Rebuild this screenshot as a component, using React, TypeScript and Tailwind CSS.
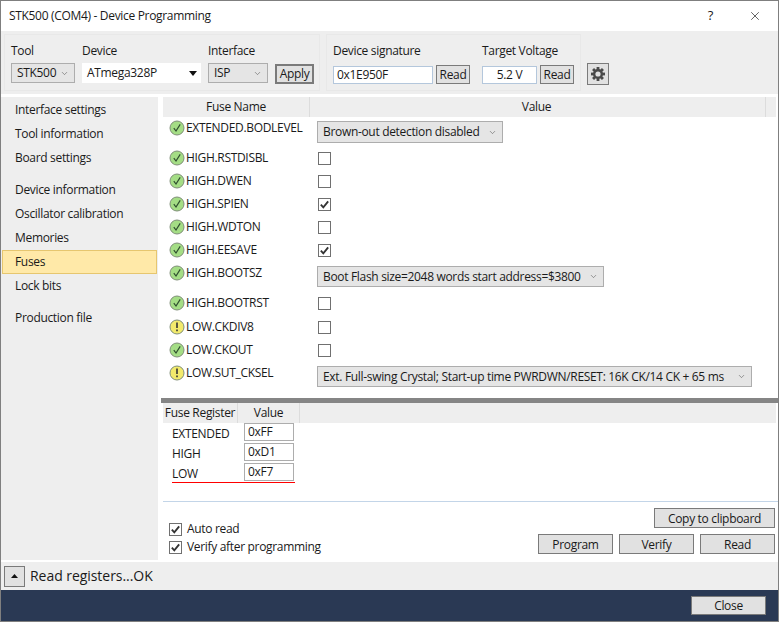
import { ChevronDown, X } from "lucide-react";

const Btn = ({ label, className }: { label: string; className: string }) => (
  <div className={`flex items-center justify-center border border-[#7a7a7a] bg-[#e1e1e1] text-[12px] text-[#1a1a1a] ${className}`}>{label}</div>
);

const Combo = ({ label, className }: { label: string; className: string }) => (
  <div className={`flex items-center justify-between border border-[#adadad] bg-[#e5e5e5] pl-[5px] pr-[5px] text-[12px] text-[#1a1a1a] ${className}`}>
    <span className="whitespace-nowrap">{label}</span>
    <ChevronDown size={9} strokeWidth={1.5} className="shrink-0 text-[#555]" />
  </div>
);

const Check = ({ checked }: { checked?: boolean }) => (
  <div className="flex h-[13px] w-[13px] shrink-0 items-center justify-center border border-[#707070] bg-white">
    {checked && (
      <svg width="11" height="11" viewBox="0 0 12 12">
        <path d="M2 6.2 L4.7 9.2 L10 2.6" fill="none" stroke="#333" strokeWidth="2" />
      </svg>
    )}
  </div>
);

const StatusIcon = ({ warn }: { warn?: boolean }) => (
  <svg width="16" height="16" viewBox="0 0 16 16" className="shrink-0">
    <circle cx="8" cy="8" r="7" fill={warn ? "#f2ea6c" : "#a4dd85"} stroke="#7f8f78" strokeWidth="1" />
    {warn ? (
      <path d="M8 3.6 V9 M8 10.6 V12.2" stroke="#333" strokeWidth="1.6" fill="none" />
    ) : (
      <path d="M4.8 8.2 L7 11 L11.2 4.4" stroke="#2f4f2f" strokeWidth="1.2" fill="none" />
    )}
  </svg>
);

type Fuse = { name: string; h: string; warn?: boolean; checked?: boolean; combo?: string; comboW?: string };

const fuses: Fuse[] = [
  { name: "EXTENDED.BODLEVEL", h: "h-[30px]", combo: "Brown-out detection disabled", comboW: "h-[22px] w-[186px]" },
  { name: "HIGH.RSTDISBL", h: "h-[23px]" },
  { name: "HIGH.DWEN", h: "h-[23px]" },
  { name: "HIGH.SPIEN", h: "h-[23px]", checked: true },
  { name: "HIGH.WDTON", h: "h-[23px]" },
  { name: "HIGH.EESAVE", h: "h-[23px]", checked: true },
  { name: "HIGH.BOOTSZ", h: "h-[30px]", combo: "Boot Flash size=2048 words start address=$3800", comboW: "h-[21px] w-[287px]" },
  { name: "HIGH.BOOTRST", h: "h-[24px]" },
  { name: "LOW.CKDIV8", h: "h-[23px]", warn: true },
  { name: "LOW.CKOUT", h: "h-[23px]" },
  { name: "LOW.SUT_CKSEL", h: "h-[30px]", warn: true, combo: "Ext. Full-swing Crystal; Start-up time PWRDWN/RESET: 16K CK/14 CK + 65 ms", comboW: "h-[21px] w-[435px]" },
];

const navGroups = [
  ["Interface settings", "Tool information", "Board settings"],
  ["Device information", "Oscillator calibration", "Memories", "Fuses", "Lock bits"],
  ["Production file"],
];

const registers = [
  { name: "EXTENDED", value: "0xFF" },
  { name: "HIGH", value: "0xD1" },
  { name: "LOW", value: "0xF7" },
];

export default function App() {
  return (
    <div className="flex h-[622px] w-[779px] flex-col overflow-hidden border border-[#7f7f7f] bg-white font-['Open_Sans','Noto_Sans',sans-serif] text-[12px] tracking-[-0.32px] text-[#1a1a1a]">
      {/* title bar */}
      <div className="flex h-[30px] shrink-0 items-center justify-between pl-[8px] pr-[16px]">
        <span className="text-[12px]">STK500 (COM4) - Device Programming</span>
        <div className="flex items-center gap-[35px]">
          <span className="text-[13px]">?</span>
          <X size={14} strokeWidth={1.2} className="text-[#222]" />
        </div>
      </div>

      {/* toolbar */}
      <div className="flex h-[63px] shrink-0 items-start gap-[6px] bg-[#eeeeee] pl-[3px] pt-[3px]">
        <div className="flex h-[57px] w-[316px] items-start gap-[7px] border border-[#e8e8e8] pl-[6px] pt-[7px]">
          <div className="flex w-[64px] flex-col gap-[3px]">
            <span className="h-[18px]">Tool</span>
            <Combo label="STK500" className="h-[20px] w-[64px]" />
          </div>
          <div className="flex w-[119px] flex-col gap-[3px]">
            <span className="h-[18px]">Device</span>
            <div className="flex h-[20px] items-center justify-between bg-white pl-[5px] pr-[4px]">
              <span>ATmega328P</span>
              <svg width="8" height="5" viewBox="0 0 8 5"><path d="M0 0H8L4 5Z" fill="#111" /></svg>
            </div>
          </div>
          <div className="flex w-[60px] flex-col gap-[3px]">
            <span className="h-[18px]">Interface</span>
            <Combo label="ISP" className="h-[20px] w-[60px]" />
          </div>
          <Btn label="Apply" className="mt-[22px] h-[20px] w-[39px] border-2 border-[#6f6f6f]" />
        </div>
        <div className="flex h-[57px] w-[255px] items-start gap-[12px] border border-[#e8e8e8] pl-[6px] pt-[7px]">
          <div className="flex flex-col gap-[5px]">
            <span className="h-[18px]">Device signature</span>
            <div className="flex items-center gap-[3px]">
              <div className="flex h-[18px] w-[100px] items-center border border-[#b4c7dc] bg-white pl-[3px]">0x1E950F</div>
              <Btn label="Read" className="h-[19px] w-[34px]" />
            </div>
          </div>
          <div className="flex flex-col gap-[5px]">
            <span className="h-[18px]">Target Voltage</span>
            <div className="flex items-center gap-[3px]">
              <div className="flex h-[18px] w-[55px] items-center justify-center border border-[#b4c7dc] bg-white">5.2 V</div>
              <Btn label="Read" className="h-[19px] w-[34px]" />
            </div>
          </div>
        </div>
        <div className="mt-[29px] flex h-[22px] w-[22px] items-center justify-center border border-[#7a7a7a] bg-[#e1e1e1]">
          <svg width="16" height="16" viewBox="0 0 16 16">
            <g fill="#4a4a4a">
              <circle cx="8" cy="8" r="5" />
              <rect x="6.6" y="1" width="2.8" height="14" />
              <rect x="6.6" y="1" width="2.8" height="14" transform="rotate(45 8 8)" />
              <rect x="6.6" y="1" width="2.8" height="14" transform="rotate(90 8 8)" />
              <rect x="6.6" y="1" width="2.8" height="14" transform="rotate(135 8 8)" />
            </g>
            <circle cx="8" cy="8" r="2.6" fill="#e1e1e1" />
          </svg>
        </div>
      </div>

      {/* body */}
      <div className="mt-[3px] flex min-h-0 flex-1">
        <div className="mb-[2px] flex w-[157px] shrink-0 flex-col bg-[#eeeeee] pl-px pt-px">
          {navGroups.map((group, i) => (
            <div key={i} className="mb-[8px] flex flex-col">
              {group.map((item) => (
                <div
                  key={item}
                  className={`flex h-[24px] w-[155px] items-center ${item === "Fuses" ? "border border-[#e6c66f] bg-[#ffe9a8] pl-[12px]" : "pl-[13px]"}`}
                >
                  {item}
                </div>
              ))}
            </div>
          ))}
        </div>

        <div className="flex min-w-0 flex-1 flex-col pl-[3px]">
          {/* fuse table */}
          <div className="ml-[2px] mr-[2px] flex h-[20px] shrink-0 items-center bg-[#eeeeee]">
            <div className="flex h-full w-[147px] items-center justify-center border-r border-[#dcdcdc]">Fuse Name</div>
            <div className="flex h-full w-[456px] items-center justify-center border-r border-[#dcdcdc] pr-[2px]">Value</div>
          </div>
          <div className="ml-[2px] h-[281px] shrink-0">
            {fuses.map((f) => (
              <div key={f.name} className={`flex items-start ${f.h}`}>
                <div className="flex w-[154px] shrink-0 items-center gap-[1px] pl-[6px] pt-[2px]">
                  <StatusIcon warn={f.warn} />
                  <span className="whitespace-nowrap">{f.name}</span>
                </div>
                {f.combo ? (
                  <Combo label={f.combo} className={`mt-[4px] ${f.comboW}`} />
                ) : (
                  <div className="pl-px pt-[5px]"><Check checked={f.checked} /></div>
                )}
              </div>
            ))}
          </div>

          <div className="mr-[-1px] h-[5px] shrink-0 bg-[#858585]" />

          {/* fuse registers */}
          <div className="ml-[2px] mr-[2px] flex h-[20px] shrink-0 items-center bg-[#eeeeee]">
            <div className="flex h-full w-[75px] items-center justify-center whitespace-nowrap border-r border-[#dcdcdc]">Fuse Register</div>
            <div className="flex h-full w-[62px] items-center justify-center border-r border-[#dcdcdc]">Value</div>
          </div>
          <div className="ml-[11px] flex w-[123px] flex-col">
            {registers.map((r) => (
              <div key={r.name} className="flex h-[20px] items-start justify-between">
                <span className="mt-[2px]">{r.name}</span>
                <div className="mr-[1px] flex h-[18px] w-[50px] items-center border border-[#adadad] bg-white pl-[3px]">{r.value}</div>
              </div>
            ))}
            <div className="-mt-px h-px bg-[#ff0000]" />
          </div>

          <div className="ml-[2px] mt-[18px] h-px shrink-0 bg-[#c3d5e8]" />

          {/* bottom actions */}
          <div className="flex flex-1 justify-between pl-[8px] pr-[3px] pt-[6px]">
            <div className="flex flex-col pt-[12px]">
              <div className="flex h-[18px] items-center gap-[5px]"><Check checked /><span>Auto read</span></div>
              <div className="flex h-[18px] items-center gap-[5px]"><Check checked /><span>Verify after programming</span></div>
            </div>
            <div className="flex flex-col items-end gap-[6px]">
              <Btn label="Copy to clipboard" className="h-[20px] w-[121px] pt-px" />
              <div className="flex gap-[6px]">
                <Btn label="Program" className="h-[20px] w-[75px] pt-px" />
                <Btn label="Verify" className="h-[20px] w-[75px] pt-px" />
                <Btn label="Read" className="h-[20px] w-[75px] pt-px" />
              </div>
            </div>
          </div>
        </div>
      </div>

      {/* status bar */}
      <div className="flex h-[28px] shrink-0 items-center gap-[5px] bg-[#eeeeee] pl-[3px]">
        <div className="flex h-[21px] w-[21px] items-center justify-center border border-[#7a7a7a] bg-[#e1e1e1]">
          <svg width="7" height="4" viewBox="0 0 7 4"><path d="M3.5 0L7 4H0Z" fill="#111" /></svg>
        </div>
        <span className="pb-px text-[14px] tracking-[-0.05px]">Read registers...OK</span>
      </div>

      {/* footer */}
      <div className="flex h-[31px] shrink-0 items-start justify-end bg-[#2a3954] pr-[12px] pt-[6px]">
        <Btn label="Close" className="h-[19px] w-[75px]" />
      </div>
    </div>
  );
}
